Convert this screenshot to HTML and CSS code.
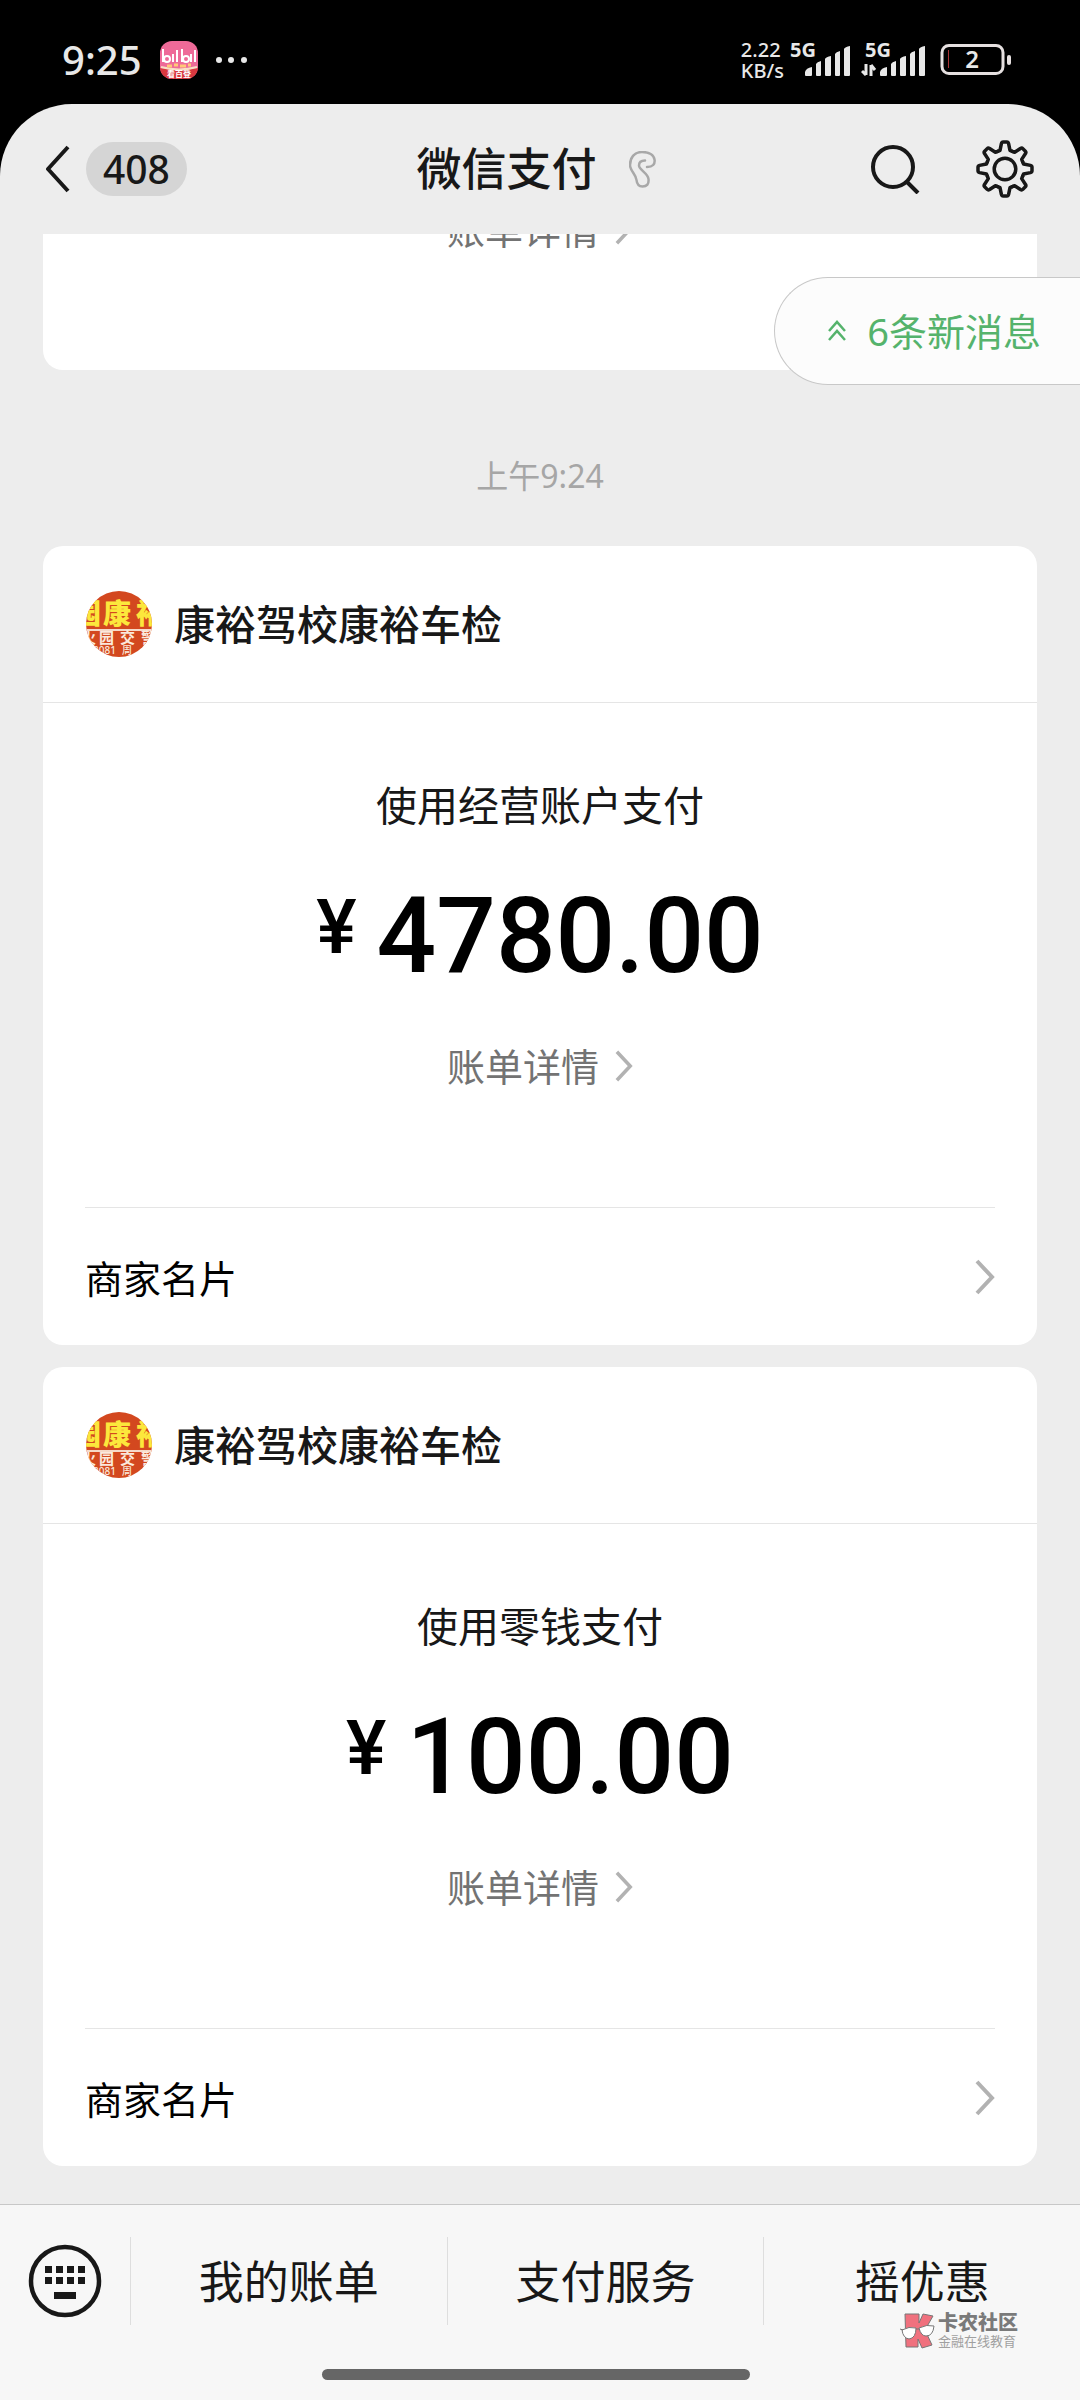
FILE: index.html
```html
<!DOCTYPE html>
<html lang="zh-CN">
<head>
<meta charset="utf-8">
<meta name="viewport" content="width=device-width, initial-scale=1">
<title>微信支付</title>
<link rel="stylesheet" href="styles.css">
</head>
<body>
<svg class="defs" width="0" height="0" aria-hidden="true">
  <defs>
    <clipPath id="avatar-clip"><circle cx="33" cy="33" r="33"/></clipPath>
    <symbol id="avatar" viewBox="0 0 66 66">
      <g clip-path="url(#avatar-clip)">
        <rect width="66" height="66" fill="#d3481f"/>
        <text class="sign-main" x="-13 17 50" y="33">园康裕</text>
        <rect y="38" width="66" height="2" fill="#f6d9c8"/>
        <text class="sign-sub" x="-5 13 34 55" y="52">火园交警</text>
        <text class="sign-small" x="7" y="63">2081</text>
        <text class="sign-small" x="36" y="63">周</text>
      </g>
    </symbol>
    <symbol id="chevron" viewBox="0 0 20 36">
      <path d="M2 2 L17 18 L2 34" fill="none" stroke="#b2b2b2" stroke-width="4"/>
    </symbol>
    <symbol id="bars" viewBox="0 0 46 30">
      <path d="M0 29v-3q1-4 7-5v8q0 1-1 1H1q-1 0-1-1z M11 29V18q1-2 5-3v14q0 1-1 1h-3q-1 0-1-1z M20 29V13q1-2 6-3v19q0 1-1 1h-4q-1 0-1-1z M30 29V8q1-2 5-3v24q0 1-1 1h-3q-1 0-1-1z M39 29V3q1-2 6-3v29q0 1-1 1h-4q-1 0-1-1z" fill="#e8e8e8"/>
    </symbol>
    <path id="tooth" d="M-7.3 -17.6 L-5 -18.6 L-3.6 -25.4 Q-3.2 -27 -1.8 -27 H1.8 Q3.2 -27 3.6 -25.4 L5 -18.6 L7.3 -17.6"/>
  </defs>
</svg>

<div class="status">
  <div class="status-side">
    <span class="clock">9:25</span>
    <svg class="app-icon" width="38" height="38" viewBox="0 0 38 38" role="img" aria-label="bilibili">
      <clipPath id="bili-clip"><rect width="38" height="38" rx="12"/></clipPath>
      <g clip-path="url(#bili-clip)">
        <rect width="38" height="38" fill="#ee6a98"/>
        <path d="M0 27 Q19 31 38 27 V38 H0z" fill="#d8383f"/>
        <path d="M3 8v13M13 13v8M17 9v12M22 8v13M31 13v8M35 9v12" stroke="#fff" stroke-width="2" fill="none"/>
        <ellipse cx="7" cy="18" rx="3" ry="3" stroke="#fff" stroke-width="2" fill="none"/>
        <ellipse cx="26" cy="18" rx="3" ry="3" stroke="#fff" stroke-width="2" fill="none"/>
        <path d="M1 26 Q19 31 37 26" stroke="#f8dfc4" stroke-width="2" fill="none"/>
        <path d="M7 25h5M14 24h4M20 25h6M28 24h3" stroke="#ffc878" stroke-width="3"/>
        <text class="app-label" x="19" y="36" text-anchor="middle">看百登</text>
      </g>
    </svg>
    <svg width="32" height="8" viewBox="0 0 32 8" aria-hidden="true"><g fill="#e8e8e8"><circle cx="3" cy="4" r="3"/><circle cx="15" cy="4" r="3"/><circle cx="28" cy="4" r="3"/></g></svg>
  </div>
  <div class="status-side status-right">
    <div class="speed"><span>2.22</span><span>KB/s</span></div>
    <div class="signal"><span>5G</span><svg width="46" height="30"><use href="#bars"/></svg></div>
    <div class="signal">
      <span>5G</span>
      <svg class="transfer" width="16" height="12" viewBox="0 0 16 12"><path d="M5 0v11M5 11 L1 7M10 12V1M10 1 L14 6" stroke="#e8e8e8" stroke-width="3" fill="none"/></svg>
      <svg width="46" height="30"><use href="#bars"/></svg>
    </div>
    <svg class="battery" width="72" height="32" viewBox="0 0 72 32" role="img" aria-label="2%">
      <rect x="2" y="1.5" width="61" height="28" rx="7" fill="none" stroke="#e6e0e0" stroke-width="3"/>
      <rect x="8" y="6" width="1" height="18" fill="#a83232"/>
      <rect x="67" y="11" width="4" height="10" rx="2" fill="#e6e0e0"/>
      <text class="charge" x="32" y="24" text-anchor="middle">2</text>
    </svg>
  </div>
</div>

<div class="app">
  <header class="topbar">
    <div class="topbar-left">
      <button class="back" type="button" aria-label="返回">
        <svg width="24" height="48" viewBox="0 0 24 48"><path d="M22 2 L2 24 L22 46" fill="none" stroke="#181818" stroke-width="4" stroke-linejoin="round"/></svg>
        <span class="unread">408</span>
      </button>
    </div>
    <div class="topbar-title">
      <h1>微信支付</h1>
      <svg width="27" height="37" viewBox="0 0 27 37" aria-hidden="true"><path d="M18 16C24 16 26 13 25.6 9C25 4 20 1 13 1C5 1 1 7 1 14C1 20 7 23 7.5 29C8 34 10 35.5 13.5 35.5C18 35.5 20 33 19.5 28C19 22 10 19 10 14.5C10 11.5 12 9.5 16 9.5" fill="none" stroke="#a8a8a8" stroke-width="2.5" stroke-linecap="round"/></svg>
    </div>
    <div class="topbar-right">
      <button type="button" aria-label="搜索">
        <svg width="50" height="50" viewBox="0 0 50 50"><g fill="none" stroke="#181818" stroke-width="4"><circle cx="23" cy="23" r="20"/><path d="M36 37 L48 49"/></g></svg>
      </button>
      <button type="button" aria-label="设置">
        <svg width="58" height="58" viewBox="-29 -29 58 58">
          <g fill="none" stroke="#181818" stroke-width="3.5" stroke-linejoin="round" stroke-linecap="round">
            <circle r="10.8"/>
            <use href="#tooth"/><use href="#tooth" transform="rotate(45)"/><use href="#tooth" transform="rotate(90)"/><use href="#tooth" transform="rotate(135)"/><use href="#tooth" transform="rotate(180)"/><use href="#tooth" transform="rotate(225)"/><use href="#tooth" transform="rotate(270)"/><use href="#tooth" transform="rotate(315)"/>
          </g>
        </svg>
      </button>
    </div>
  </header>

  <main class="chat">
    <article class="card">
      <div class="card-body">
        <a class="detail" href="#bill">账单详情 <svg width="18" height="32"><use href="#chevron"/></svg></a>
      </div>
    </article>

    <time class="stamp">上午9:24</time>

    <article class="card">
      <h2 class="merchant"><svg width="66" height="66"><use href="#avatar"/></svg><span>康裕驾校康裕车检</span></h2>
      <div class="card-body">
        <p class="method">使用经营账户支付</p>
        <p class="amount"><span class="currency">¥</span>4780.00</p>
        <a class="detail" href="#bill">账单详情 <svg width="18" height="32"><use href="#chevron"/></svg></a>
      </div>
      <a class="profile" href="#merchant">商家名片 <svg width="20" height="36"><use href="#chevron"/></svg></a>
    </article>

    <article class="card">
      <h2 class="merchant"><svg width="66" height="66"><use href="#avatar"/></svg><span>康裕驾校康裕车检</span></h2>
      <div class="card-body">
        <p class="method">使用零钱支付</p>
        <p class="amount"><span class="currency">¥</span>100.00</p>
        <a class="detail" href="#bill">账单详情 <svg width="18" height="32"><use href="#chevron"/></svg></a>
      </div>
      <a class="profile" href="#merchant">商家名片 <svg width="20" height="36"><use href="#chevron"/></svg></a>
    </article>

    <button class="new-messages" type="button">
      <svg width="20" height="22" viewBox="0 0 20 22"><path d="M2 11 L10 2 L18 11 M2 20 L10 11 L18 20" fill="none" stroke="#55b36c" stroke-width="2.5"/></svg>
      <span>6条新消息</span>
    </button>
  </main>

  <footer class="bottom">
    <nav class="menu">
      <button class="keyboard" type="button" aria-label="键盘">
        <svg width="74" height="74" viewBox="0 0 74 74"><circle cx="37" cy="37" r="34" fill="none" stroke="#181818" stroke-width="4.5"/><path d="M17 22h7v7h-7z M28 22h7v7h-7z M39 22h7v7h-7z M50 22h7v7h-7z M17 33h7v7h-7z M28 33h7v7h-7z M39 33h7v7h-7z M50 33h7v7h-7z M26 48h22v7H26z" fill="#181818"/></svg>
      </button>
      <button type="button">我的账单</button>
      <button type="button">支付服务</button>
      <button type="button">摇优惠</button>
    </nav>
    <div class="gesture"><div class="home-bar"></div></div>
    <div class="watermark">
      <svg width="36" height="36" viewBox="0 0 36 36" aria-hidden="true">
        <path d="M5 1 L19 1 L19 10 L23 1 L33 3 L25 17 L32 32 L22 35 L18 26 L18 34 L6 34z" fill="#f0717e" stroke="#777" stroke-width="1"/>
        <path d="M2 17 Q9 13 16 15 Q16 25 9 26 Q3 25 2 17z M19 15 Q27 11 34 13 Q33 23 26 23 Q21 23 19 15z M0 16 L3 17 M16 16 L19 16" fill="#fff" stroke="#777" stroke-width="1"/>
      </svg>
      <div class="watermark-text"><strong>卡农社区</strong><span>金融在线教育</span></div>
    </div>
  </footer>
</div>
</body>
</html>
```

FILE: styles.css
```css
* {
  box-sizing: border-box;
}

body {
  margin: 0;
  height: 100vh;
  display: flex;
  flex-direction: column;
  background: #000;
  color: #181818;
  font-family: "Noto Sans", "Noto Sans CJK SC", sans-serif;
}

h1, h2, p {
  margin: 0;
}

svg {
  display: block;
  flex: none;
}

button {
  margin: 0;
  padding: 0;
  border: 0;
  background: none;
  color: inherit;
  font: inherit;
}

a {
  color: inherit;
  text-decoration: none;
}

.defs {
  position: absolute;
}

/* Status bar */
.status {
  flex: none;
  height: 104px;
  padding: 16px 68px 0 62px;
  display: flex;
  align-items: center;
  justify-content: space-between;
  color: #e8e8e8;
}

.status-side {
  display: flex;
  align-items: center;
  gap: 18px;
}

.clock {
  font-size: 40px;
  font-weight: 500;
  line-height: 48px;
}

.app-label {
  font-size: 8px;
  font-weight: 700;
  fill: #fff;
}

.status-right {
  gap: 0;
}

.speed {
  display: flex;
  flex-direction: column;
  font-size: 20px;
  font-weight: 500;
  line-height: 21px;
}

.signal {
  display: flex;
  height: 32px;
  align-items: flex-end;
  position: relative;
  padding-left: 15px;
  margin-left: 6px;
}

.signal + .signal {
  padding-left: 0;
  margin-left: 10px;
}

.signal span {
  position: absolute;
  top: -4px;
  left: 0;
  font-size: 20px;
  font-weight: 700;
  line-height: 20px;
}

.signal + .signal span {
  left: 4px;
}

.transfer {
  margin-right: 3px;
}

.battery {
  margin-left: 14px;
  overflow: visible;
}

.charge {
  font-size: 24px;
  font-weight: 600;
  fill: #e8e8e8;
}

/* App frame */
.app {
  flex: 1;
  min-height: 0;
  display: flex;
  flex-direction: column;
  overflow: hidden;
  border-radius: 72px 72px 0 0;
  background: #ededed;
}

.topbar {
  flex: none;
  height: 130px;
  padding: 0 46px;
  display: grid;
  grid-template-columns: 1fr auto 1fr;
  align-items: center;
}

.back {
  display: flex;
  align-items: center;
  gap: 16px;
}

.unread {
  padding: 0 17px;
  border-radius: 27px;
  background: #d5d5d5;
  font-size: 39px;
  font-weight: 500;
  line-height: 54px;
}

.topbar-title {
  display: flex;
  align-items: center;
  gap: 32px;
  padding-right: 8px;
}

.topbar-title h1 {
  font-size: 45px;
  font-weight: 500;
  line-height: 60px;
}

.topbar-right {
  display: flex;
  align-items: center;
  justify-content: flex-end;
  gap: 56px;
}

/* Conversation */
.chat {
  flex: 1;
  min-height: 0;
  position: relative;
  overflow: hidden;
  display: flex;
  flex-direction: column;
  justify-content: flex-end;
  padding: 0 43px 38px;
}

.card {
  flex: none;
  border-radius: 20px;
  background: #fff;
}

.card + .card {
  margin-top: 22px;
}

.stamp {
  flex: none;
  padding: 82px 0 46px;
  text-align: center;
  color: #a6a6a6;
  font-size: 32px;
  line-height: 48px;
}

.merchant {
  display: flex;
  align-items: center;
  gap: 22px;
  height: 157px;
  padding: 0 43px;
  border-bottom: 1px solid #e5e5e5;
  font-size: 41px;
  font-weight: 500;
}

.merchant span,
.new-messages span {
  padding-bottom: 4px;
}

.sign-main {
  font-size: 28px;
  font-weight: 900;
  fill: #fce73c;
}

.sign-sub {
  font-size: 15px;
  font-weight: 700;
  fill: #fbe9dc;
}

.sign-small {
  font-size: 10px;
  font-weight: 500;
  fill: #fbe9dc;
}

.card-body {
  display: flex;
  flex-direction: column;
  align-items: center;
  padding: 72px 43px 116px;
}

.method {
  font-size: 41px;
  line-height: 60px;
}

.amount {
  display: flex;
  align-items: flex-start;
  gap: 20px;
  margin: 48px 0 50px;
  color: #000;
  font-family: Roboto, sans-serif;
  font-size: 105px;
  font-weight: 500;
  line-height: 108px;
}

.currency {
  font-size: 76px;
  line-height: 88px;
}

.detail {
  display: flex;
  align-items: center;
  gap: 16px;
  color: #737373;
  font-size: 38px;
  line-height: 50px;
}

.profile {
  display: flex;
  align-items: center;
  justify-content: space-between;
  height: 138px;
  margin: 0 42px;
  border-top: 1px solid #e5e5e5;
  color: #000;
  font-size: 38px;
}

.new-messages {
  position: absolute;
  top: 43px;
  right: 0;
  display: flex;
  align-items: center;
  gap: 20px;
  height: 108px;
  padding: 0 39px 0 52px;
  border: 1px solid #c8c8c8;
  border-right: 0;
  border-radius: 54px 0 0 54px;
  background: #fcfcfc;
  color: #55b36c;
  font-size: 38px;
}

/* Bottom menu */
.bottom {
  flex: none;
  position: relative;
  border-top: 1px solid #c8c8c8;
  background: #f7f7f7;
}

.menu {
  display: grid;
  grid-template-columns: 130px 1fr 1fr 1fr;
  padding: 32px 0 44px;
}

.menu button {
  height: 88px;
  padding-bottom: 4px;
  border-left: 1px solid #dedede;
  font-size: 45px;
}

.menu .keyboard {
  border: 0;
  padding: 0;
  display: flex;
  align-items: center;
  justify-content: center;
}

.gesture {
  display: flex;
  justify-content: center;
  padding: 0 8px 20px 0;
}

.home-bar {
  width: 428px;
  height: 11px;
  border-radius: 6px;
  background: #666;
}

.watermark {
  position: absolute;
  top: 107px;
  right: 62px;
  display: flex;
  align-items: center;
  gap: 2px;
  color: #7a7a7a;
}

.watermark-text {
  display: flex;
  flex-direction: column;
}

.watermark strong {
  font-size: 20px;
  font-weight: 900;
  line-height: 21px;
}

.watermark span {
  color: #a0a0a0;
  font-size: 13px;
  line-height: 16px;
}
```
